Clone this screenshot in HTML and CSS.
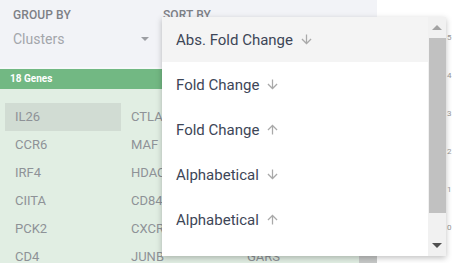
FILE: index.html
```html
<!DOCTYPE html>
<html lang="en">
<head>
    <meta charset="UTF-8">
    <title>Gene Explorer - Sort</title>
    <link rel="stylesheet" href="styles.css">
</head>
<body>
<div class="page">
    <section class="left-panel">
        <!-- Controls row -->
        <div class="controls">
            <div class="control">
                <label class="control-label">Group By</label>
                <div class="select">
                    <span>Clusters</span>
                    <span class="caret"></span>
                </div>
            </div>
            <div class="control">
                <label class="control-label">Sort By</label>
            </div>
        </div>

        <div class="genes-bar">18 Genes</div>

        <div class="genes-body">
            <div class="genes-grid">
                <div class="gene selected">IL26</div>
                <div class="gene">CTLA4</div>
                <div class="gene">IL17F</div>
                <div class="gene">CCR6</div>
                <div class="gene">MAF</div>
                <div class="gene">RORC</div>
                <div class="gene">IRF4</div>
                <div class="gene">HDAC9</div>
                <div class="gene">IL23R</div>
                <div class="gene">CIITA</div>
                <div class="gene">CD84</div>
                <div class="gene">BATF</div>
                <div class="gene">PCK2</div>
                <div class="gene">CXCR6</div>
                <div class="gene">STAT3</div>
                <div class="gene">CD4</div>
                <div class="gene">JUNB</div>
                <div class="gene">GARS</div>
            </div>
            <div class="list-scroll"></div>
        </div>
    </section>

    <section class="chart-axis">
        <span>5</span>
        <span>4</span>
        <span>3</span>
        <span>2</span>
        <span>1</span>
        <span>0</span>
    </section>
</div>

<!-- Sort by menu (open) -->
<div class="sort-menu">
    <ul class="sort-options">
        <li class="active">Abs. Fold Change
            <svg class="arrow" viewBox="0 0 24 24"><path d="M20 12l-1.41-1.41L13 16.17V4h-2v12.17l-5.58-5.59L4 12l8 8 8-8z"/></svg>
        </li>
        <li>Fold Change
            <svg class="arrow" viewBox="0 0 24 24"><path d="M20 12l-1.41-1.41L13 16.17V4h-2v12.17l-5.58-5.59L4 12l8 8 8-8z"/></svg>
        </li>
        <li>Fold Change
            <svg class="arrow" viewBox="0 0 24 24"><path d="M4 12l1.41 1.41L11 7.83V20h2V7.83l5.58 5.59L20 12l-8-8-8 8z"/></svg>
        </li>
        <li>Alphabetical
            <svg class="arrow" viewBox="0 0 24 24"><path d="M20 12l-1.41-1.41L13 16.17V4h-2v12.17l-5.58-5.59L4 12l8 8 8-8z"/></svg>
        </li>
        <li>Alphabetical
            <svg class="arrow" viewBox="0 0 24 24"><path d="M4 12l1.41 1.41L11 7.83V20h2V7.83l5.58 5.59L20 12l-8-8-8 8z"/></svg>
        </li>
    </ul>
    <div class="menu-scrollbar">
        <span class="scroll-btn up"></span>
        <span class="scroll-thumb"></span>
        <span class="scroll-btn down"></span>
    </div>
</div>
</body>
</html>
```

FILE: styles.css
```css
body {
    margin: 0;
    font-family: Roboto, "Noto Sans", Arial, sans-serif;
    background-color: #ffffff;
    overflow: hidden;
}

.page {
    display: flex;
    width: 452px;
    height: 263px;
    overflow: hidden;
}

/* Left panel with controls and gene list */
.left-panel {
    width: 377px;
    flex-shrink: 0;
    display: flex;
    flex-direction: column;
}

.controls {
    display: flex;
    flex-shrink: 0;
    height: 67px;
    background-color: #f2f3f7;
    border-bottom: 2px solid #f7f8fa;
    padding: 0 0 0 13px;
}

.control {
    width: 150px;
}

.control-label {
    display: block;
    margin-top: 8px;
    font-size: 12px;
    font-weight: 500;
    color: #7d8086;
    text-transform: uppercase;
    letter-spacing: 0.1px;
}

.select {
    display: flex;
    align-items: center;
    justify-content: space-between;
    width: 136px;
    margin-top: 9px;
    font-size: 14px;
    color: #a3a6ab;
}

.caret {
    width: 0;
    height: 0;
    border-left: 4px solid transparent;
    border-right: 4px solid transparent;
    border-top: 4px solid #9c9ea3;
}

/* Green header bar */
.genes-bar {
    flex-shrink: 0;
    height: 20px;
    line-height: 20px;
    background-color: #72b883;
    color: #ffffff;
    font-size: 10px;
    font-weight: 700;
    padding-left: 10px;
}

.genes-body {
    flex: 1;
    min-height: 0;
    overflow: hidden;
    display: flex;
    background-color: #e1eee3;
}

.genes-grid {
    flex: 1;
    display: grid;
    grid-template-columns: repeat(3, 116px);
    grid-auto-rows: 28px;
    padding: 14px 0 0 5px;
    align-content: start;
}

.gene {
    font-size: 13px;
    color: #8e9297;
    padding-left: 10px;
    line-height: 27px;
}

.gene.selected {
    background-color: #d1dcd3;
}

.list-scroll {
    width: 18px;
    align-self: flex-end;
    height: 7px;
    background-color: #c7c9c8;
}

/* Chart axis on the right */
.chart-axis {
    flex: 1;
    display: flex;
    flex-direction: column;
    padding: 34px 0 0 70px;
    font-size: 8px;
    line-height: 8px;
    color: #9a9a9a;
    gap: 30px;
}

/* Sort by dropdown menu */
.sort-menu {
    position: absolute;
    left: 162px;
    top: 17px;
    width: 284px;
    height: 239px;
    display: flex;
    background-color: #ffffff;
    box-shadow: 0 2px 6px rgba(0, 0, 0, 0.25);
}

.sort-options {
    flex: 1;
    list-style: none;
    margin: 0;
    padding: 0;
}

.sort-options li {
    display: flex;
    align-items: center;
    height: 45px;
    padding-left: 14px;
    font-size: 15px;
    color: #3d4657;
}

.sort-options li.active {
    background-color: #f4f4f4;
}

.arrow {
    width: 15px;
    height: 15px;
    margin-left: 6px;
    fill: #a9a9a9;
}

.menu-scrollbar {
    width: 18px;
    display: flex;
    flex-direction: column;
    align-items: center;
    background-color: #f1f1f1;
}

.scroll-btn {
    width: 0;
    height: 0;
    border-left: 5px solid transparent;
    border-right: 5px solid transparent;
}

.scroll-btn.up {
    margin: 8px 0 8px;
    border-bottom: 5px solid #a3a3a3;
}

.scroll-btn.down {
    margin: auto 0 8px;
    border-top: 5px solid #505050;
}

.scroll-thumb {
    width: 17px;
    height: 175px;
    background-color: #c1c1c1;
}
```
